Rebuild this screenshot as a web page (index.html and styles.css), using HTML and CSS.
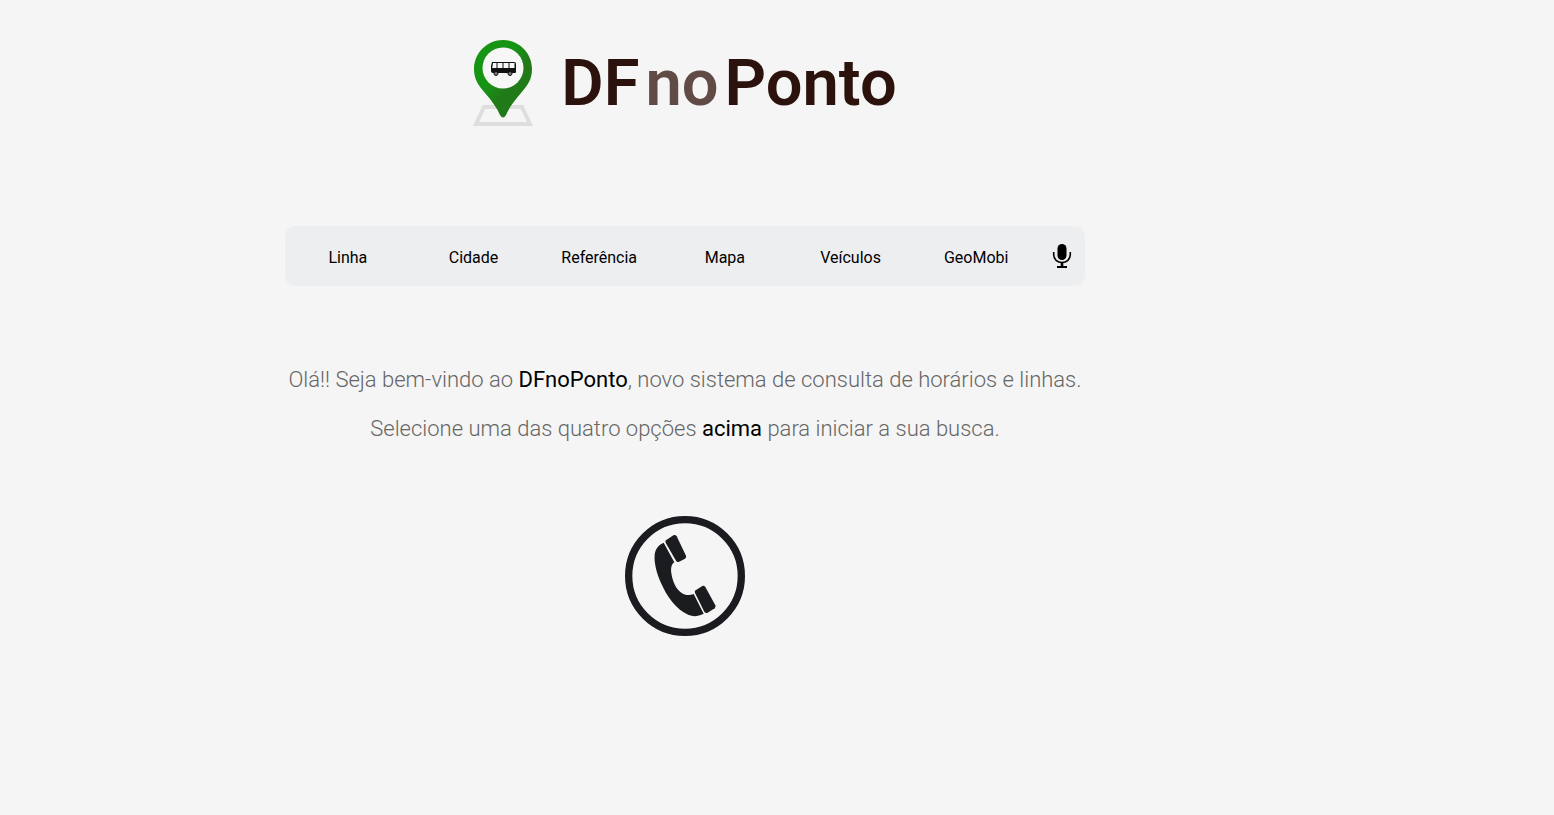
FILE: index.html
```
<!DOCTYPE html>
<html lang="pt-br">
<head>
<meta charset="UTF-8">
<meta name="viewport" content="width=device-width, initial-scale=1.0">
<title>DF no Ponto</title>
<link rel="stylesheet" href="styles.css">
</head>
<body>

<div class="container">
    <header>
        <h1 class="logo">
            <svg class="pin" viewBox="0 0 60 88" aria-hidden="true">
                <defs>
                    <linearGradient id="green" x1="0" y1="0" x2="1" y2="1">
                        <stop offset="0.4" stop-color="#169414"/>
                        <stop offset="0.6" stop-color="#207a18"/>
                    </linearGradient>
                </defs>
                <path d="M11 68H49L57 85H3Z" fill="none" stroke="#dedede" stroke-width="4"/>
                <path d="M30 1C14 1 1 14 1 30C1 40 5 46 12 54C19 62 24 69 27 76Q30 81 33 76C36 69 41 62 48 54C55 46 59 40 59 30C59 14 46 1 30 1Z" fill="url(#green)"/>
                <circle cx="30" cy="29" r="20.5" fill="#f7f7f7"/>
                <path d="M19 23H41Q43 23 43 25V33Q43 34 42 34H20Q18 34 18 32V27Z" fill="#111"/>
                <path d="M20 24H23.5V29H19.2ZM24.5 24H29.5V29H24.5ZM30.5 24H35.5V29H30.5ZM36.5 24H41.5V29H36.5Z" fill="#f7f7f7"/>
                <circle cx="23" cy="34.5" r="2" fill="#777" stroke="#111"/>
                <circle cx="37" cy="34.5" r="2" fill="#777" stroke="#111"/>
            </svg>
            <span class="name"><span>DF</span><span class="light">no</span><span>Ponto</span></span>
        </h1>
    </header>

    <nav class="menu">
        <a href="#linha">Linha</a>
        <a href="#cidade">Cidade</a>
        <a href="#referencia">Referência</a>
        <a href="#mapa">Mapa</a>
        <a href="#veiculos">Veículos</a>
        <a href="#geomobi">GeoMobi</a>
        <button type="button" class="mic" aria-label="Busca por voz">
            <svg viewBox="0 0 20 26" aria-hidden="true">
                <rect x="5.5" y="1" width="9" height="16" rx="4.5"/>
                <path d="M1.7 9V11.5C1.7 16.5 5.3 19.5 10 19.5S18.3 16.5 18.3 11.5V9" fill="none" stroke="#000" stroke-width="1.6"/>
                <path d="M8.7 19.5H11.3V23H15V25H5V23H8.7Z"/>
            </svg>
        </button>
    </nav>

    <main class="welcome">
        <p>Olá!! Seja bem-vindo ao <b>DFnoPonto</b>, novo sistema de consulta de horários e linhas.</p>
        <p>Selecione uma das quatro opções <b>acima</b> para iniciar a sua busca.</p>
        <a class="phone" href="#telefone" aria-label="Telefone">
            <svg viewBox="0 0 420 420" aria-hidden="true">
                <circle cx="210" cy="210" r="169" fill="none" stroke="#1b1c20" stroke-width="22"/>
                <g fill="#1b1c20">
                    <path d="M146 110L178 169C169 175 167 187 169 202C174 235 190 261 211 266Q224 269 236 264L266 323C250 331 236 333 221 327C182 310 155 270 138 231C124 199 117 169 119 147C121 128 130 117 146 110Z"/>
                    <path d="M153 103L175 88Q181 85 185 91L213 149Q215 154 210 158L191 168Q186 169 183 164L152 110Q150 106 153 103Z"/>
                    <path d="M242 253L262 240Q267 238 271 243L301 298Q303 303 299 307L278 320Q272 323 268 317L240 261Q238 256 242 253Z"/>
                </g>
            </svg>
        </a>
    </main>
</div>

</body>
</html>
```
FILE: styles.css
```
body {
    font-family: Roboto, Arial, sans-serif;
    margin: 0;
    background-color: #f5f5f5;
    color: #000;
}
.container {
    max-width: 1370px;
    box-sizing: border-box;
    padding: 39px 20px;
}
.logo {
    display: flex;
    justify-content: center;
    gap: 28px;
    margin: 0;
}
.pin {
    width: 60px;
    height: 88px;
}
.name {
    display: flex;
    gap: 6px;
    font-size: 65px;
    font-weight: 600;
    line-height: 88px;
    color: #2c120c;
}
.light {
    color: #614b46;
}
.menu {
    display: flex;
    align-items: center;
    max-width: 800px;
    height: 60px;
    margin: 99px auto 0;
    background-color: #edeef0;
    border-radius: 10px;
}
.menu a {
    flex: 1;
    padding-top: 4px;
    font-size: 16px;
    line-height: 20px;
    text-align: center;
    text-decoration: none;
    color: #000;
}
.mic {
    display: flex;
    justify-content: center;
    width: 46px;
    padding: 0;
    border: none;
    background: none;
    cursor: pointer;
}
.mic svg {
    width: 20px;
    height: 26px;
}
.welcome {
    margin-top: 81px;
    text-align: center;
}
.welcome p {
    margin: 0 0 23px;
    font-size: 22px;
    font-weight: 300;
    line-height: 26px;
    color: #666;
}
.welcome b {
    font-weight: 400;
    color: #000;
}
.phone {
    display: inline-block;
    margin-top: 41px;
}
.phone svg {
    display: block;
    width: 140px;
    height: 140px;
}
```
